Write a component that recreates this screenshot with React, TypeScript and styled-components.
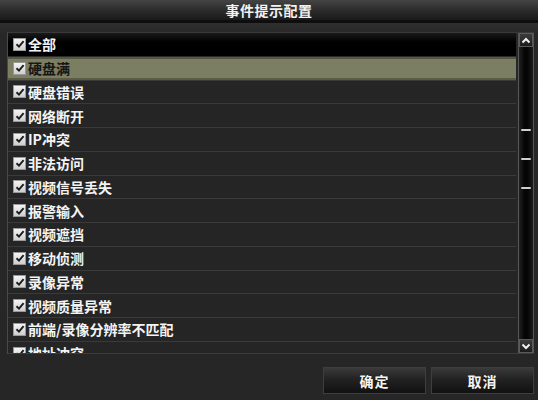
import React from 'react';
import styled, { createGlobalStyle } from 'styled-components';

const GlobalStyle = createGlobalStyle`
  html, body {
    margin: 0;
    padding: 0;
    background: #262626;
  }
  body {
    font-family: "Noto Sans CJK SC", "Noto Sans", "Liberation Sans", sans-serif;
  }
`;

const events = [
  '全部',
  '硬盘满',
  '硬盘错误',
  '网络断开',
  'IP冲突',
  '非法访问',
  '视频信号丢失',
  '报警输入',
  '视频遮挡',
  '移动侦测',
  '录像异常',
  '视频质量异常',
  '前端/录像分辨率不匹配',
  '地址冲突',
];

const Dialog = styled.div`
  width: 538px;
  height: 400px;
  display: flex;
  flex-direction: column;
  background: #262626;
  overflow: hidden;
`;

const TitleBar = styled.div`
  height: 20px;
  flex: none;
  display: flex;
  align-items: center;
  justify-content: center;
  background: linear-gradient(#444 0%, #2c2c2c 50%, #1a1a1a 100%);
  border-bottom: 3px solid #0e0e0e;
  color: #f2f2f2;
  font-size: 14px;
  font-weight: 700;
  letter-spacing: 0.5px;
`;

const Body = styled.div`
  flex: 1;
  display: flex;
  flex-direction: column;
  padding: 9px 4px 0 7px;
  background: linear-gradient(#2f2f2f 0px, #272727 12px, #262626 100%);
`;

const ListFrame = styled.div`
  height: 320px;
  display: flex;
  border-left: 1px solid #4a4a4a;
  border-top: 1px solid #3a3a3a;
  border-bottom: 1px solid #3c3c3c;
`;

const List = styled.div`
  flex: 1;
  overflow: hidden;
  background: #222;
`;

const Row = styled.div<{ $head?: boolean; $selected?: boolean }>`
  height: 22.75px;
  display: flex;
  align-items: center;
  gap: 2px;
  padding-left: 5px;
  border-bottom: 1px solid ${(p) => (p.$head ? '#2a2a2a' : '#3a3a3a')};
  background: ${(p) =>
    p.$selected
      ? '#7b7e63'
      : p.$head
      ? 'linear-gradient(#1a1a1a, #000 40%, #000)'
      : '#252525'};
  color: ${(p) => (p.$selected ? '#151515' : '#f4f4f4')};
  font-size: 14px;
  font-weight: 700;
  white-space: nowrap;
  ${(p) => p.$selected && 'box-shadow: inset 0 2px 0 #55573f, inset 0 -2px 0 #5a5c44;'}
`;

const Check = styled.span`
  width: 13px;
  height: 13px;
  flex: none;
  display: flex;
  align-items: center;
  justify-content: center;
  background: linear-gradient(#f4f4f4, #cfcfcf);
  border: 1px solid #999;
  box-sizing: border-box;
`;

const ScrollBar = styled.div`
  width: 14px;
  margin-left: 2px;
  display: flex;
  flex-direction: column;
  background: #0c0c0c;
  border-left: 1px solid #555;
  border-right: 1px solid #555;
`;

const Arrow = styled.div`
  height: 14px;
  flex: none;
  display: flex;
  align-items: center;
  justify-content: center;
  background: linear-gradient(#3c3c3c, #1b1b1b);
  border: 1px solid #5a5a5a;
  box-sizing: border-box;
`;

const Track = styled.div`
  flex: 1;
  display: flex;
  flex-direction: column;
  align-items: center;
  padding-top: 82px;
  gap: 27px;
  background: linear-gradient(90deg, #222 0%, #050505 40%, #050505 60%, #1c1c1c 100%);
`;

const Tick = styled.div`
  width: 10px;
  height: 2px;
  background: #cfcfcf;
  border-radius: 1px;
`;

const Footer = styled.div`
  flex: 1;
  display: flex;
  justify-content: flex-end;
  gap: 5px;
  padding: 13px 0 0 0;
`;

const Button = styled.button`
  width: 103px;
  height: 27px;
  border: 1px solid #3e3e3e;
  background: linear-gradient(#3a3a3a 0%, #222 45%, #111 100%);
  color: #f4f4f4;
  font-family: inherit;
  font-size: 14px;
  font-weight: 700;
  letter-spacing: 1px;
  cursor: pointer;
`;

const CheckMark = () => (
  <svg width="10" height="10" viewBox="0 0 10 10">
    <path d="M1.5 5.2 L4 7.6 L8.6 2.2" fill="none" stroke="#1c1c1c" strokeWidth="1.9" />
  </svg>
);

const App = (): JSX.Element => {
  return (
    <>
      <GlobalStyle />
      <Dialog>
        <TitleBar>事件提示配置</TitleBar>
        <Body>
          <ListFrame>
            <List>
              {events.map((name, index) => (
                <Row key={name} $head={index === 0} $selected={index === 1}>
                  <Check>
                    <CheckMark />
                  </Check>
                  {name}
                </Row>
              ))}
            </List>
            <ScrollBar>
              <Arrow>
                <svg width="10" height="7" viewBox="0 0 10 7">
                  <path d="M1.5 5.5 L5 2 L8.5 5.5" fill="none" stroke="#f0f0f0" strokeWidth="2" />
                </svg>
              </Arrow>
              <Track>
                <Tick />
                <Tick />
                <Tick />
              </Track>
              <Arrow>
                <svg width="10" height="7" viewBox="0 0 10 7">
                  <path d="M1.5 1.5 L5 5 L8.5 1.5" fill="none" stroke="#f0f0f0" strokeWidth="2" />
                </svg>
              </Arrow>
            </ScrollBar>
          </ListFrame>
          <Footer>
            <Button>确定</Button>
            <Button>取消</Button>
          </Footer>
        </Body>
      </Dialog>
    </>
  );
};

export default App;
